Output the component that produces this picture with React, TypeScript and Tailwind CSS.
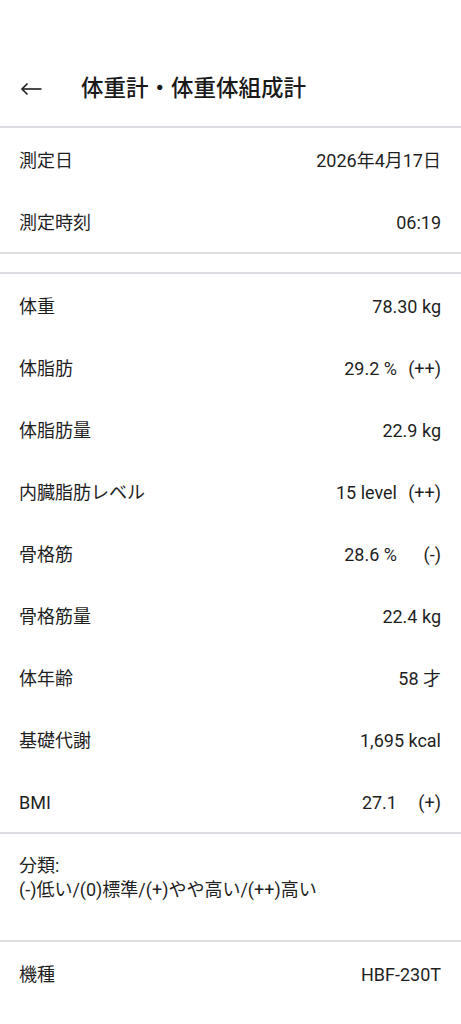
import React from "react";

const font = { fontFamily: 'Roboto, "Noto Sans CJK JP", sans-serif' };

function Row({ label, value, status }: { label: string; value: string; status?: string }) {
  return (
    <div className="flex h-[62px] items-center justify-between pl-[19px] pr-[20px] pt-[3px] text-[18px] text-[#1f1f1f]">
      <span>{label}</span>
      <div className="flex items-center">
        <span>{value}</span>
        {status !== undefined && <span className="w-[44px] text-right">{status}</span>}
      </div>
    </div>
  );
}

function Divider() {
  return <div className="h-[2px] bg-[#dcdce2]" />;
}

export default function App() {
  const rows: { label: string; value: string; status?: string }[] = [
    { label: "体重", value: "78.30 kg" },
    { label: "体脂肪", value: "29.2 %", status: "(++)" },
    { label: "体脂肪量", value: "22.9 kg" },
    { label: "内臓脂肪レベル", value: "15 level", status: "(++)" },
    { label: "骨格筋", value: "28.6 %", status: "(-)" },
    { label: "骨格筋量", value: "22.4 kg" },
    { label: "体年齢", value: "58 才" },
    { label: "基礎代謝", value: "1,695 kcal" },
    { label: "BMI", value: "27.1", status: "(+)" },
  ];
  return (
    <div className="min-h-[1024px] w-[461px] bg-white" style={font}>
      <div className="flex h-[126px] items-center pt-[52px]">
        <svg width="24" height="24" viewBox="0 0 24 24" className="ml-[19px]" fill="none" stroke="#1f1f1f" strokeWidth="1.6">
          <path d="M22.5 12H3" />
          <path d="M8.5 6.5L3 12l5.5 5.5" />
        </svg>
        <span className="ml-[38px] text-[22.5px] font-medium text-[#1a1a1a]">体重計・体重体組成計</span>
      </div>
      <Divider />
      <Row label="測定日" value="2026年4月17日" />
      <Row label="測定時刻" value="06:19" />
      <Divider />
      <div className="h-[18px]" />
      <Divider />
      {rows.map((r) => (
        <Row key={r.label} label={r.label} value={r.value} status={r.status} />
      ))}
      <Divider />
      <div className="h-[106px] pl-[19px] pt-[20px] text-[18px] leading-[24px] text-[#1f1f1f]">
        <div>分類:</div>
        <div>(-)低い/(0)標準/(+)やや高い/(++)高い</div>
      </div>
      <Divider />
      <Row label="機種" value="HBF-230T" />
    </div>
  );
}
